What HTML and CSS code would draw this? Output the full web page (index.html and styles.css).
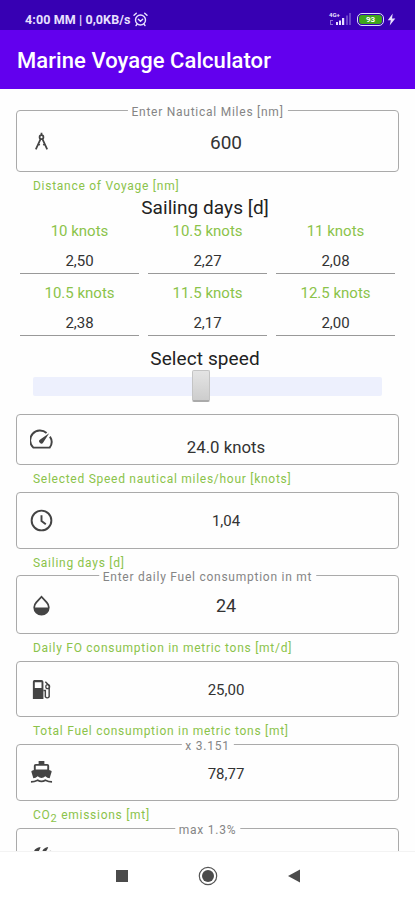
FILE: index.html
```html
<!DOCTYPE html>
<html lang="en">
<head>
<meta charset="utf-8">
<title>Marine Voyage Calculator</title>
<link rel="stylesheet" href="styles.css">
</head>
<body>
<div class="status">
  <span class="clock">4:00 MM | 0,0KB/s</span>
  <svg class="alarm" width="15" height="15" viewBox="0 0 15 15" fill="none" stroke="currentColor" stroke-width="1.4" stroke-linecap="round"><circle cx="7.5" cy="8" r="5"/><path d="M1 3.3 3.3 1.2M14 3.3l-2.3-2.1M5.3 7.2l2.2 2 2.2-2M4 12.3l-1 1.2M11 12.3l1 1.2"/></svg>
  <div class="signal">
    <span class="net">4G+</span>
    <svg width="24" height="14" viewBox="0 0 24 14" fill="currentColor"><path d="M7 10h2v3H7zM10 8.500h2V13h-2zM13 6h2.200v7H13z"/><path opacity=".3" d="M17 3.500h2V13h-2zM20 1h2v12h-2z"/><path opacity=".5" d="M1 8h3v1H2v3h2v1H1z"/></svg>
  </div>
  <div class="battery"><span>93</span></div>
  <svg class="bolt" width="9" height="13" viewBox="0 0 9 13" fill="currentColor"><path d="M5.700 0.500 0.800 7.200h3L2.700 12.500 8.300 5.500H5z"/></svg>
</div>
<header class="appbar"><h1>Marine Voyage Calculator</h1></header>

<main class="content">
  <section class="field distance">
    <div class="box">
      <span class="legend">Enter Nautical Miles [nm]</span>
      <svg class="icon" viewBox="0 0 24 24" fill="none" stroke="currentColor" stroke-width="2"><circle cx="12" cy="7" r="2.200"/><path d="M12 2v3M11 9 5.500 21M13 9l5.500 12M8.500 15l1.500 1M15.500 15l-1.500 1" /></svg>
      <span class="value large">600</span>
    </div>
    <p class="helper">Distance of Voyage [nm]</p>
  </section>

  <h2 class="days-title">Sailing days [d]</h2>
  <div class="speeds">
    <div class="speed"><span class="knots">10 knots</span><span class="days">2,50</span></div>
    <div class="speed"><span class="knots">10.5 knots</span><span class="days">2,27</span></div>
    <div class="speed"><span class="knots">11 knots</span><span class="days">2,08</span></div>
    <div class="speed"><span class="knots">10.5 knots</span><span class="days">2,38</span></div>
    <div class="speed"><span class="knots">11.5 knots</span><span class="days">2,17</span></div>
    <div class="speed"><span class="knots">12.5 knots</span><span class="days">2,00</span></div>
  </div>
  <h2 class="speed-title">Select speed</h2>
  <div class="slider"><div class="track"><div class="thumb"></div></div></div>

  <section class="field selected">
    <div class="box">
      <svg class="icon" viewBox="0 0 24 24" fill="none" stroke="currentColor" stroke-width="2"><path d="M17.300 5.300A10 10 0 0 0 3.500 20.500h17A10 10 0 0 0 20.800 9"/><path fill="currentColor" stroke="none" d="M20 5.500 10.600 12a2.300 2.300 0 1 0 3.200 3.200z"/></svg>
      <span class="value knots-value">24.0 knots</span>
    </div>
    <p class="helper">Selected Speed nautical miles/hour [knots]</p>
  </section>
  <section class="field sailing">
    <div class="box">
      <svg class="icon" viewBox="0 0 24 24" fill="none" stroke="currentColor" stroke-width="2"><circle cx="12" cy="12" r="10.300"/><path d="M12 6.500V12.500l4.500 3.500"/></svg>
      <span class="value">1,04</span>
    </div>
    <p class="helper">Sailing days [d]</p>
  </section>
  <section class="field daily">
    <div class="box">
      <span class="legend">Enter daily Fuel consumption in mt</span>
      <svg class="icon" viewBox="0 0 24 24" fill="currentColor"><path fill-rule="evenodd" d="M12 1.500 5.900 8A8.500 8.500 0 1 0 18.100 8zM12 4.300 16.700 9.300Q18.800 11.500 18.700 14H5.300Q5.200 11.500 7.300 9.300z"/></svg>
      <span class="value medium">24</span>
    </div>
    <p class="helper">Daily FO consumption in metric tons [mt/d]</p>
  </section>
  <section class="field total">
    <div class="box">
      <svg class="icon" viewBox="0 0 24 24" fill="currentColor"><path fill-rule="evenodd" d="M4 2h8q2 0 2 2v18H3V4q0-1 1-2zM5 4.500v6h7v-6z"/><path fill="none" stroke="currentColor" stroke-width="1.500" d="M14 13h2v6.500q2 2.500 4 0V8l-4-4"/><circle cx="18.500" cy="9" r="2" fill="none" stroke="currentColor" stroke-width="1.300"/></svg>
      <span class="value">25,00</span>
    </div>
    <p class="helper">Total Fuel consumption in metric tons [mt]</p>
  </section>
  <section class="field emissions">
    <div class="box">
      <span class="legend">x 3.151</span>
      <svg class="icon" viewBox="0 0 24 24" fill="currentColor"><path fill-rule="evenodd" d="M9 0h6v3h3q2 0 2 2v4.500l2 .7q.8.400.5 1.200L20.500 18q-2.500 0-4.500-2-4 3.500-8 0-2 2-4.500 2L1.500 11.400q-.2-.9.500-1.200l2-.7V5q0-2 2-2h3zM6 5v3.800h12V5z"/><path fill="none" stroke="currentColor" stroke-width="1.800" d="M1 21.700q3.500 0 7-1.700 4 2.600 8 0 3.500 1.700 7 1.700"/></svg>
      <span class="value">78,77</span>
    </div>
    <p class="helper co2">CO<sub>2</sub> emissions [mt]</p>
  </section>
  <section class="field maximum">
    <div class="box">
      <span class="legend">max 1.3%</span>
      <svg class="icon" viewBox="0 0 24 24" fill="currentColor"><path d="M4 7q1-4 7-5-1 5-5 7zM13 6q1-3 6-4-1 4-4 6zM18 8q1-2 4-2-1 3-3 4z"/></svg>
    </div>
  </section>
</main>

<nav class="navbar">
  <svg width="14" height="14" viewBox="0 0 14 14"><path fill="#4b4b4b" d="M1 1h12v12H1z"/></svg>
  <svg width="20" height="20" viewBox="0 0 20 20"><circle cx="10" cy="10" r="8.700" fill="none" stroke="#555" stroke-width="1.200"/><circle cx="10" cy="10" r="6" fill="#4b4b4b"/></svg>
  <svg width="14" height="14" viewBox="0 0 14 14"><path fill="#4b4b4b" d="M13 .5v13L1 7z"/></svg>
</nav>
</body>
</html>
```
FILE: styles.css
```css
* { box-sizing: border-box; }
body {
  margin: 0;
  width: 415px;
  height: 900px;
  overflow: hidden;
  display: flex;
  flex-direction: column;
  background: #fefefe;
  color: #333;
  font-family: Roboto, sans-serif;
}
h1, h2, p { margin: 0; font-weight: 400; }

.status {
  height: 30px;
  flex: none;
  display: flex;
  align-items: center;
  padding: 8px 19px 0 25px;
  background: #3700b3;
  color: #e8e0ff;
}
.clock { font-size: 12.5px; font-weight: 700; width: 108px; white-space: nowrap; letter-spacing: 0.1px; }
.signal { display: flex; margin-left: auto; position: relative; }
.net { position: absolute; left: 0; top: -1px; font-size: 6px; line-height: 7px; font-weight: 700; }
.battery {
  width: 27px;
  height: 13px;
  margin-left: 4px;
  padding: 1px;
  border: 1.5px solid #dcdcff;
  border-radius: 5px;
}
.battery span {
  display: block;
  height: 9px;
  border-radius: 3px;
  background: #3fa51c;
  color: #fff;
  font-size: 8px;
  line-height: 9px;
  font-weight: 700;
  text-align: center;
}
.bolt { margin-left: 3px; }

.appbar {
  height: 59px;
  flex: none;
  display: flex;
  align-items: center;
  padding: 2px 17px 0;
  background: #6200ee;
  color: #fff;
}
.appbar h1 { font-size: 22px; font-weight: 500; letter-spacing: 0.06px; white-space: nowrap; }

.content {
  flex: none;
  height: 762px;
  overflow: hidden;
  padding: 21px 16px 0;
}
.field { display: flex; flex-direction: column; }
.box {
  position: relative;
  flex: none;
  display: flex;
  align-items: center;
  border: 1px solid #aaa;
  border-radius: 4px;
  padding-left: 13px;
}
.legend {
  position: absolute;
  top: -7px;
  left: 50%;
  transform: translateX(-50%);
  padding: 0 4px;
  background: #fefefe;
  color: #858585;
  font-size: 12px;
  line-height: 16px;
  letter-spacing: 0.75px;
  white-space: nowrap;
}
.icon { width: 23px; height: 23px; flex: none; color: #444; }
.value { flex: 1; padding-left: 1px; text-align: center; font-size: 15px; line-height: 20px; }
.value.large { font-size: 19px; }
.value.medium { font-size: 18px; }
.helper {
  flex: 1;
  padding-left: 17px;
  color: #8bc34a;
  font-size: 12px;
  line-height: 28px;
  letter-spacing: 0.73px;
  white-space: nowrap;
}

.distance { height: 86px; }
.distance .box { height: 62px; }
.distance .icon { width: 21px; height: 21px; margin: 0 1px; }
.distance .value { padding-top: 3px; }
.days-title, .speed-title { text-align: center; font-size: 19px; line-height: 22px; color: #222; }
.days-title { padding: 1px 5px 0 0; letter-spacing: 0.06px; }

.speeds {
  display: grid;
  grid-template-columns: repeat(3, 119px);
  grid-auto-rows: 54px;
  column-gap: 9px;
  row-gap: 8px;
  padding: 1px 4px 0;
}
.speed { display: flex; flex-direction: column; text-align: center; border-bottom: 1px solid #999; }
.knots { color: #8bc34a; font-size: 15px; line-height: 22px; }
.days { font-size: 15px; line-height: 20px; padding-top: 9px; }

.speed-title { padding: 12px 5px 0 0; letter-spacing: 0.1px; }
.slider { padding: 7px 17px 18px; }
.track { height: 19px; display: flex; align-items: center; border-radius: 2px; background: #edf0fd; }
.thumb {
  flex: none;
  width: 18px;
  height: 32px;
  margin: -1px 0 0 159px;
  border: 1px solid #c4c4c4;
  border-bottom: 2px solid #aaa;
  border-radius: 2px;
  background: linear-gradient(#e4e4e4, #cdcdcd);
}

.selected { height: 78px; }
.selected .box { height: 51px; }
.knots-value { font-size: 16.8px; padding-top: 14px; }
.sailing { height: 83px; }
.sailing .box { height: 57px; }
.daily { height: 86px; }
.daily .box { height: 59px; }
.daily .icon { margin-top: 2px; }
.daily .value { padding-top: 3px; }
.total { height: 83px; }
.total .box { height: 56px; }
.total .value, .emissions .value { padding-top: 2px; }
.emissions { height: 84px; }
.emissions .box { height: 57px; }
.maximum .box { height: 56px; }
.co2 sub { font-size: 11px; line-height: 0; }

.navbar {
  flex: 1;
  display: flex;
  align-items: center;
  gap: 69px;
  padding: 0 0 0 115px;
  border-top: 1px solid #f3f3f3;
  background: #fff;
}
```
